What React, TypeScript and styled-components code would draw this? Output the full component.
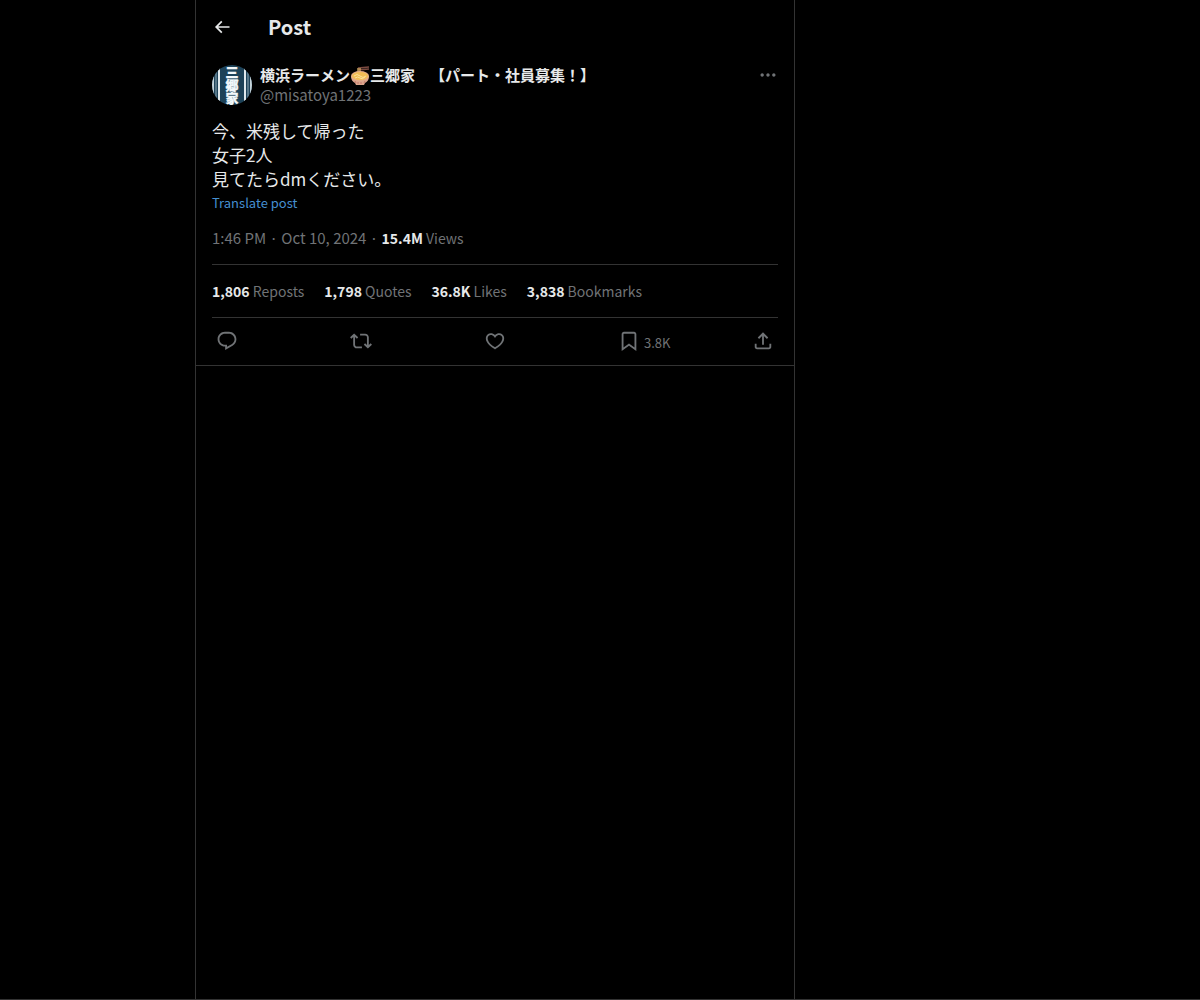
import React from "react";
import styled, { createGlobalStyle } from "styled-components";

const GlobalStyle = createGlobalStyle`
  *, *::before, *::after { box-sizing: border-box; }
  html, body { margin: 0; background: #000; }
  body {
    color: #e7e9ea;
    font-family: "Noto Sans CJK JP", "Noto Sans", sans-serif;
    font-size: 15px;
    line-height: 20px;
  }
`;

const Page = styled.div`
  display: grid;
  grid-template-columns: minmax(0, 195px) minmax(0, 600px) minmax(0, 1fr);
  min-height: 100vh;
  border-bottom: 1px solid #333;
`;

const Column = styled.main`
  grid-column: 2;
  border-left: 1px solid #333;
  border-right: 1px solid #333;
`;

const Header = styled.header`
  display: flex;
  align-items: center;
  gap: 36px;
  height: 54px;
  padding: 0 16px;
`;

const Title = styled.h1`
  margin: 0;
  font-size: 20px;
  line-height: 24px;
  font-weight: 700;
`;

const IconButton = styled.button<{ $tone?: string }>`
  display: inline-flex;
  align-items: center;
  gap: 4px;
  padding: 0;
  border: 0;
  background: none;
  color: ${(p) => p.$tone ?? "#707376"};
  font: inherit;
  font-size: 13px;
  cursor: pointer;
`;

const Glyph = styled.svg<{ $size: number }>`
  display: block;
  flex: none;
  width: ${(p) => p.$size}px;
  height: ${(p) => p.$size}px;
  fill: currentColor;
`;

const Post = styled.article`
  padding: 11px 16px 0;
  border-bottom: 1px solid #333;
`;

const Author = styled.div`
  display: flex;
  align-items: flex-start;
  gap: 8px;
`;

const Avatar = styled.svg`
  display: block;
  flex: none;
  width: 40px;
  height: 40px;
  border-radius: 50%;
`;

const AvatarText = styled.text`
  writing-mode: vertical-rl;
  font-size: 13px;
  font-weight: 900;
`;

const Names = styled.div`
  flex: 1;
  min-width: 0;
`;

const DisplayName = styled.div`
  display: flex;
  align-items: center;
  height: 20px;
  font-weight: 700;
  white-space: pre;
  text-spacing-trim: space-all;
  font-kerning: none;
`;

const Emoji = styled.svg`
  flex: none;
  width: 20px;
  height: 20px;
`;

const Muted = styled.div`
  color: #707376;
`;

const Body = styled.p`
  margin: 14px 0 0;
  font-size: 17px;
  line-height: 24px;
  white-space: pre-line;
`;

const Translate = styled.a`
  display: block;
  width: max-content;
  color: #458fd0;
  font-size: 13px;
  line-height: 24px;
  text-decoration: none;
`;

const Line = styled.div`
  display: flex;
  flex-wrap: wrap;
  gap: 20px;
  padding: 16px 0;
  border-bottom: 1px solid #333;
  color: #707376;
`;

const Meta = styled.div`
  padding: 13px 0 16px;
  border-bottom: 1px solid #333;
  color: #707376;
`;

const Count = styled.span`
  font-size: 14px;

  b {
    color: #e7e9ea;
    font-weight: 700;
  }
`;

const Actions = styled.div`
  display: flex;
  align-items: center;
  height: 47px;
  padding: 0 4px 2px;
`;

const Action = styled.div`
  flex: 1 1 0;
  display: flex;

  &:last-child {
    flex: none;
  }
`;

const ActionCount = styled.span`
  padding-top: 4px;
`;

const paths = {
  back: "M7.414 13l5.043 5.04-1.414 1.42L3.586 12l7.457-7.46 1.414 1.42L7.414 11H21v2H7.414z",
  more: "M3 12c0-1.1.9-2 2-2s2 .9 2 2-.9 2-2 2-2-.9-2-2zm9 2c1.1 0 2-.9 2-2s-.9-2-2-2-2 .9-2 2 .9 2 2 2zm7 0c1.1 0 2-.9 2-2s-.9-2-2-2-2 .9-2 2 .9 2 2 2z",
  reply:
    "M1.751 10c0-4.42 3.584-8 8.005-8h4.366c4.49 0 8.129 3.64 8.129 8.13 0 2.96-1.607 5.68-4.196 7.11l-8.054 4.46v-3.69h-.067c-4.49.1-8.183-3.51-8.183-8.01zm8.005-6c-3.317 0-6.005 2.69-6.005 6 0 3.37 2.77 6.08 6.138 6.01l.351-.01h1.761v2.3l5.087-2.81c1.951-1.08 3.163-3.13 3.163-5.36 0-3.39-2.744-6.13-6.129-6.13H9.756z",
  repost:
    "M4.5 3.88l4.432 4.14-1.364 1.46L5.5 7.55V16c0 1.1.896 2 2 2H13v2H7.5c-2.209 0-4-1.79-4-4V7.55L1.432 9.48.068 8.02 4.5 3.88zM16.5 6H11V4h5.5c2.209 0 4 1.79 4 4v8.45l2.068-1.93 1.364 1.46-4.432 4.14-4.432-4.14 1.364-1.46 2.068 1.93V8c0-1.1-.896-2-2-2z",
  like: "M16.697 5.5c-1.222-.06-2.679.51-3.89 2.16l-.805 1.09-.806-1.09C9.984 6.01 8.526 5.44 7.304 5.5c-1.243.07-2.349.78-2.91 1.91-.552 1.12-.633 2.78.479 4.82 1.074 1.97 3.257 4.27 7.129 6.61 3.87-2.34 6.052-4.64 7.126-6.61 1.111-2.04 1.03-3.7.477-4.82-.561-1.13-1.666-1.84-2.908-1.91zm4.187 7.69c-1.351 2.48-4.001 5.12-8.379 7.67l-.503.3-.504-.3c-4.379-2.55-7.029-5.19-8.382-7.67-1.36-2.5-1.41-4.86-.514-6.67.887-1.79 2.647-2.91 4.601-3.01 1.651-.09 3.368.56 4.798 2.01 1.429-1.45 3.146-2.1 4.796-2.01 1.954.1 3.714 1.22 4.601 3.01.896 1.81.846 4.17-.514 6.67z",
  bookmark:
    "M4 4.5C4 3.12 5.119 2 6.5 2h11C18.881 2 20 3.12 20 4.5v18.44l-8-5.71-8 5.71V4.5zM6.5 4c-.276 0-.5.22-.5.5v14.56l6-4.29 6 4.29V4.5c0-.28-.224-.5-.5-.5h-11z",
  share:
    "M12 2.59l5.7 5.7-1.41 1.42L13 6.41V16h-2V6.41l-3.3 3.3-1.41-1.42L12 2.59zM21 15l-.02 3.51c0 1.38-1.12 2.49-2.5 2.49H5.5C4.11 21 3 19.88 3 18.5V15h2v3.5c0 .28.22.5.5.5h12.98c.28 0 .5-.22.5-.5L19 15h2z",
};

function Icon({ name, size = 22 }: { name: keyof typeof paths; size?: number }) {
  return (
    <Glyph $size={size} viewBox="0 0 24 24" aria-hidden="true">
      <path d={paths[name]} />
    </Glyph>
  );
}

function ShopAvatar() {
  return (
    <Avatar viewBox="0 0 40 40" role="img" aria-label="三郷家">
      <rect width="40" height="40" fill="#1d4258" />
      <path d="M1 0v40M39 0v40" stroke="#c4d3da" strokeWidth="2" />
      <path d="M4 0v40M36 0v40" stroke="#8fa9b6" strokeWidth="1" />
      <path d="M7 0v40M33 0v40" stroke="#dfe9ed" strokeWidth="2" />
      <AvatarText
        x="20"
        y="20"
        textAnchor="middle"
        fill="#f3f8fa"
        stroke="#f3f8fa"
        strokeWidth="0.300"
      >
        三郷家
      </AvatarText>
    </Avatar>
  );
}

function RamenEmoji() {
  return (
    <Emoji viewBox="0 0 20 20" role="img" aria-label="ramen">
      <path d="M8 3l11-1M8 5l11-1" stroke="#7a4a40" strokeWidth="1.300" />
      <path d="M8 3v7M10 3v7" stroke="#e6bd69" strokeWidth="1.200" />
      <path d="M1 11c0 4 2 6 4 7l1 2h8l1-2c2-1 4-3 4-7z" fill="#dba58c" />
      <ellipse cx="10" cy="11" rx="9" ry="5" fill="#e3ad8b" />
      <ellipse cx="10" cy="11" rx="8" ry="4" fill="#f0bd55" />
      <path d="M4 11q3-3 6 0t6 0M5 13q3-2 5 0t5-1" fill="none" stroke="#fbe29a" />
      <path d="M5 16l1 2M8 17v2M11 17v2M15 16l-1 2" stroke="#c4786c" />
    </Emoji>
  );
}

const stats = [
  ["1,806", "Reposts"],
  ["1,798", "Quotes"],
  ["36.8K", "Likes"],
  ["3,838", "Bookmarks"],
];

const actions: { name: keyof typeof paths; label: string; count?: string }[] = [
  { name: "reply", label: "Reply" },
  { name: "repost", label: "Repost" },
  { name: "like", label: "Like" },
  { name: "bookmark", label: "Bookmark", count: "3.8K" },
  { name: "share", label: "Share" },
];

export default function App() {
  return (
    <>
      <GlobalStyle />
      <Page>
        <Column>
          <Header>
            <IconButton $tone="#e7e9ea" aria-label="Back">
              <Icon name="back" size={20} />
            </IconButton>
            <Title>Post</Title>
          </Header>
          <Post>
            <Author>
              <ShopAvatar />
              <Names>
                <DisplayName>
                  <span>横浜ラーメン</span>
                  <RamenEmoji />
                  <span>{"三郷家　【パート・社員募集！】"}</span>
                </DisplayName>
                <Muted>@misatoya1223</Muted>
              </Names>
              <IconButton aria-label="More">
                <Icon name="more" size={20} />
              </IconButton>
            </Author>
            <Body>{"今、米残して帰った\n女子2人\n見てたらdmください。"}</Body>
            <Translate href="#translate">Translate post</Translate>
            <Meta>
              1:46 PM · Oct 10, 2024 ·{" "}
              <Count>
                <b>15.4M</b> Views
              </Count>
            </Meta>
            <Line>
              {stats.map(([value, label]) => (
                <Count key={label}>
                  <b>{value}</b> {label}
                </Count>
              ))}
            </Line>
            <Actions>
              {actions.map(({ name, label, count }) => (
                <Action key={name}>
                  <IconButton aria-label={label}>
                    <Icon name={name} />
                    {count && <ActionCount>{count}</ActionCount>}
                  </IconButton>
                </Action>
              ))}
            </Actions>
          </Post>
        </Column>
      </Page>
    </>
  );
}
